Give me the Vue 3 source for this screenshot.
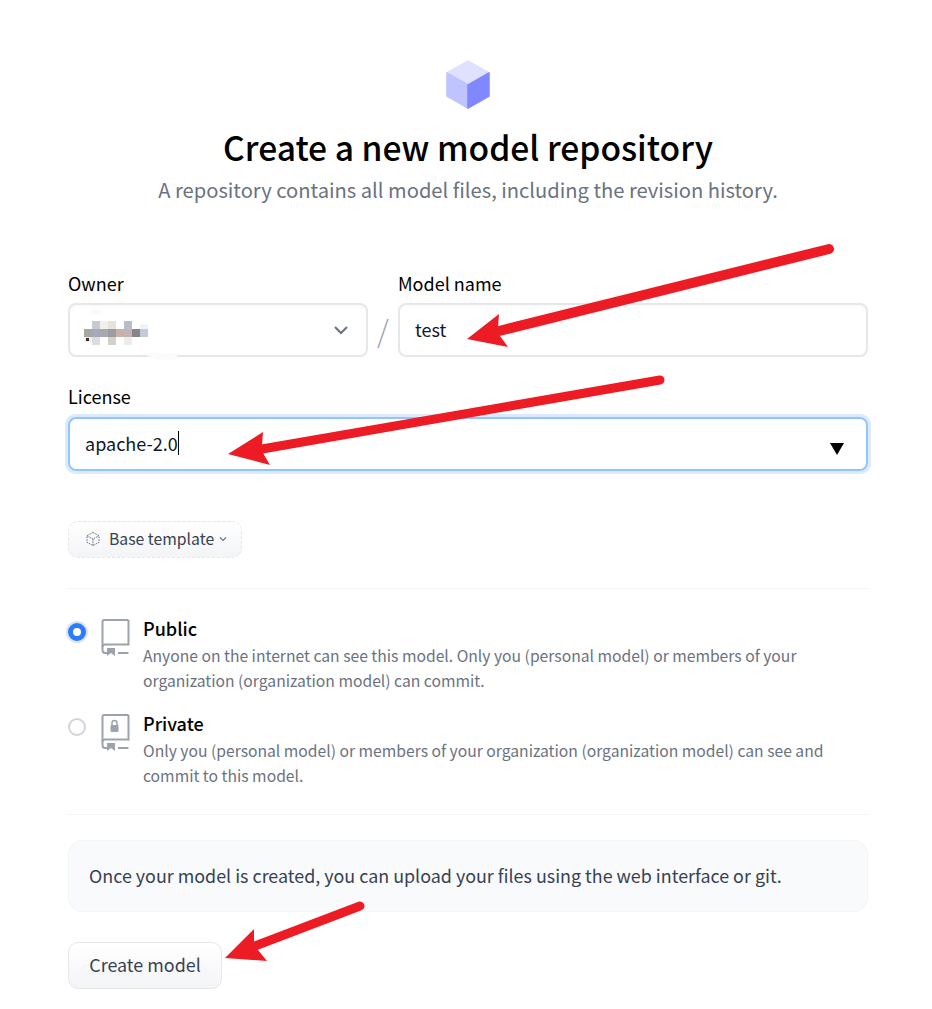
<template>
  <div class="page">
    <form class="form" @submit.prevent>
      <svg class="cube" viewBox="0 0 44 50" width="44" height="50">
        <path d="M22 1 L43 13 L22 25 L1 13 Z" fill="#dfe1ff" stroke="#dfe1ff" stroke-width="1.5" stroke-linejoin="round" />
        <path d="M1 13 L22 25 L22 48 L1 36 Z" fill="#bfc3ff" stroke="#bfc3ff" stroke-width="1.5" stroke-linejoin="round" />
        <path d="M43 13 L22 25 L22 48 L43 36 Z" fill="#8088ff" stroke="#8088ff" stroke-width="1.5" stroke-linejoin="round" />
      </svg>
      <h1>Create a new model repository</h1>
      <p class="subtitle">A repository contains all model files, including the revision history.</p>

      <div class="owner-row">
        <div class="field owner">
          <label>Owner</label>
          <div class="input select-box">
            <svg class="blurred" width="120" height="65" viewBox="0 0 120 65">
              <rect v-for="(b, i) in blurBlocks" :key="i" :x="b[0]" :y="b[1]" :width="b[2]" :height="b[3]" :fill="b[4]" />
              <path d="M70 53 L110 53 L104 60 L90 60 Z" fill="#fbfbfb" />
            </svg>
            <svg class="chevron" width="18" height="18" viewBox="0 0 18 18">
              <path d="M3 6 L9 12 L15 6" fill="none" stroke="#6b7280" stroke-width="2" />
            </svg>
          </div>
        </div>
        <span class="slash">/</span>
        <div class="field name">
          <label>Model name</label>
          <div class="input">test</div>
        </div>
      </div>

      <div class="field license">
        <label>License</label>
        <div class="input focused">
          <span>apache-2.0</span><i class="caret"></i>
          <svg class="triangle" width="14" height="12" viewBox="0 0 14 12">
            <path d="M0 0 H14 L7 12 Z" fill="#000" />
          </svg>
        </div>
      </div>

      <button type="button" class="template-btn">
        <svg width="16" height="16" viewBox="0 0 16 16" fill="none" stroke="#6b7280" stroke-width="1" stroke-dasharray="1.6 1">
          <path d="M8 1.5 L14 4.7 V11.3 L8 14.5 L2 11.3 V4.7 Z" />
          <path d="M2 4.7 L8 8 L14 4.7 M8 8 V14.5" />
        </svg>
        <span>Base template</span>
        <svg width="10" height="10" viewBox="0 0 10 10">
          <path d="M2 3.5 L5 6.5 L8 3.5" fill="none" stroke="#6b7280" stroke-width="1.2" />
        </svg>
      </button>

      <div class="visibility">
        <div v-for="opt in visibility" :key="opt.title" class="option">
          <span class="radio" :class="{ checked: opt.checked }"></span>
          <svg class="book" width="30" height="37" viewBox="0 0 30 37" fill="none" stroke="#9ca3af" stroke-width="2">
            <path d="M28.5 1 H4 Q2.5 1 2.5 3 V31 Q2.5 34 5 34 H7" />
            <path d="M2.5 28 Q2.5 25.5 5 25.5 H28.5 V1" />
            <path d="M18 34 H28.5" />
            <path d="M7 29 H15 V37 L11 34 L7 37 Z" fill="#9ca3af" stroke="none" />
            <template v-if="opt.lock">
              <rect x="10.5" y="11" width="8" height="7" rx="1" fill="#9ca3af" stroke="none" />
              <path d="M12 11 V9 a2.5 2.5 0 0 1 5 0 V11" stroke-width="1.5" />
            </template>
          </svg>
          <div class="option-text">
            <h2>{{ opt.title }}</h2>
            <p>{{ opt.line1 }}<br />{{ opt.line2 }}</p>
          </div>
        </div>
      </div>

      <div class="notice">Once your model is created, you can upload your files using the web interface or git.</div>

      <button type="submit" class="create-btn">Create model</button>
    </form>

    <!-- 截图上的红色标注箭头 -->
    <svg class="arrows" width="932" height="1009" viewBox="0 0 932 1009">
      <g v-for="(a, i) in arrows" :key="i">
        <line :x1="a.tail[0]" :y1="a.tail[1]" :x2="a.neck[0]" :y2="a.neck[1]" stroke="#ed1c24" :stroke-width="a.width" stroke-linecap="round" />
        <polygon :points="a.head" fill="#ed1c24" />
      </g>
    </svg>
  </div>
</template>

<script setup>
const visibility = [
  {
    title: 'Public',
    line1: 'Anyone on the internet can see this model. Only you (personal model) or members of your',
    line2: 'organization (organization model) can commit.',
    checked: true,
    lock: false,
  },
  {
    title: 'Private',
    line1: 'Only you (personal model) or members of your organization (organization model) can see and',
    line2: 'commit to this model.',
    checked: false,
    lock: true,
  },
]

// 打码区域的马赛克色块
const blurBlocks = [
  [22, 10, 8, 4, '#f8f8f8'],
  [22, 21, 8, 8, '#c8cacf'],
  [30, 21, 8, 8, '#f2f0ee'],
  [38, 21, 8, 8, '#e8e2dc'],
  [54, 21, 8, 8, '#b9bdc8'],
  [70, 24, 8, 5, '#eef4f8'],
  [14, 29, 8, 8, '#a8a6a3'],
  [22, 29, 8, 8, '#a4a9bb'],
  [30, 29, 8, 8, '#a9aaad'],
  [38, 29, 8, 8, '#9c9ca2'],
  [46, 29, 8, 8, '#c5b3a8'],
  [54, 29, 8, 8, '#c4b3b5'],
  [62, 29, 8, 8, '#87858c'],
  [70, 29, 8, 8, '#c3ccd6'],
  [14, 37, 8, 5, '#f0f0f0'],
  [16, 38, 3, 3, '#3a2a2a'],
  [22, 37, 8, 8, '#dcdcdc'],
  [38, 37, 8, 8, '#d2d1cb'],
  [54, 37, 8, 8, '#ececea'],
]

const arrows = [
  { tail: [829, 249], neck: [499, 331], width: 10, head: '467,339 499,314 498,327 500,336 508,347' },
  { tail: [660, 380], neck: [262, 449], width: 9, head: '228,454 263,432 262,445 263,453 270,465' },
  { tail: [360, 906], neck: [255, 946], width: 9, head: '225,958 254,929 254,942 258,950 267,961' },
]
</script>

<style scoped>
.page {
  position: relative;
  width: 932px;
  height: 1009px;
  overflow: hidden;
  background: #fff;
  font-family: 'Noto Sans CJK SC', 'Noto Sans', sans-serif;
  color: #111827;
}

.form {
  width: 800px;
  margin-left: 68px;
  padding-top: 60px;
  display: flex;
  flex-direction: column;
}

.cube {
  align-self: center;
  display: block;
}

h1 {
  margin: 12px 0 0;
  text-align: center;
  font-size: 33.6px;
  line-height: 50px;
  font-weight: 500;
  color: #000;
}

.subtitle {
  margin: 2px 0 0;
  text-align: center;
  font-size: 20.15px;
  line-height: 32px;
  color: #6b7280;
}

.owner-row {
  margin-top: 64px;
  display: flex;
  align-items: flex-end;
}

.field label {
  display: block;
  font-size: 18px;
  line-height: 26px;
  margin-bottom: 7px;
  color: #000;
}

.owner {
  width: 300px;
}

.name {
  flex: 1;
}

.slash {
  width: 30px;
  text-align: center;
  font-size: 30px;
  line-height: 54px;
  color: #9ca3af;
  font-weight: 300;
}

.input {
  position: relative;
  box-sizing: border-box;
  height: 54px;
  display: flex;
  align-items: center;
  padding: 0 15px 2px;
  border: 2px solid #e5e7eb;
  border-radius: 8px;
  font-size: 18px;
  color: #111827;
  box-shadow: inset 0 2px 3px rgba(0, 0, 0, 0.02);
}

.blurred {
  position: absolute;
  left: 0;
  top: -5px;
}

.chevron {
  position: absolute;
  right: 16px;
  top: 16px;
}

.license {
  margin-top: 26px;
}

.license label {
  margin-bottom: 8px;
}

.focused {
  border-color: #93c5fd;
  box-shadow: 0 0 0 3px #dbeafe;
}

.caret {
  width: 1px;
  height: 24px;
  background: #000;
}

.triangle {
  position: absolute;
  right: 22px;
  top: 24px;
}

.template-btn {
  align-self: flex-start;
  box-sizing: border-box;
  margin-top: 50px;
  width: 174px;
  height: 37px;
  padding: 0 0 2px 16px;
  display: flex;
  align-items: center;
  gap: 8px;
  border: 1px dashed #e5e7eb;
  border-radius: 10px;
  background: linear-gradient(#fff, #f3f4f6);
  font-family: inherit;
  font-size: 15.75px;
  color: #374151;
}

.template-btn span {
  margin-right: -4px;
}

.visibility {
  margin-top: 30px;
  padding: 24px 0 26px;
  border-top: 1px solid #f3f4f6;
  border-bottom: 1px solid #f3f4f6;
  display: flex;
  flex-direction: column;
  gap: 15px;
}

.option {
  display: flex;
  align-items: flex-start;
}

.radio {
  box-sizing: border-box;
  flex: none;
  width: 18px;
  height: 18px;
  margin-top: 10px;
  border-radius: 50%;
  border: 2px solid #d1d5db;
  background: #fff;
}

.radio.checked {
  border: 5px solid #2b7bff;
  box-shadow: 0 0 0 2px #dde3ee;
}

.book {
  flex: none;
  margin: 6px 13px 0 14px;
}

.option-text h2 {
  margin: 0;
  font-size: 18px;
  line-height: 30px;
  font-weight: 500;
  color: #000;
}

.option-text p {
  margin: 0;
  font-size: 15.68px;
  line-height: 25px;
  color: #6b7280;
}

.notice {
  box-sizing: border-box;
  margin-top: 25px;
  height: 72px;
  padding: 0 20px 2px;
  display: flex;
  align-items: center;
  border: 1px solid #f3f4f6;
  border-radius: 14px;
  background: #f9fafb;
  font-size: 17.9px;
  color: #374151;
}

.create-btn {
  align-self: flex-start;
  box-sizing: border-box;
  margin-top: 30px;
  width: 154px;
  height: 47px;
  padding-bottom: 5px;
  border: 1px solid #e5e7eb;
  border-radius: 10px;
  background: linear-gradient(#fff, #f3f4f6);
  font-family: inherit;
  font-size: 17.9px;
  color: #374151;
}

.arrows {
  position: absolute;
  left: 0;
  top: 0;
  pointer-events: none;
}
</style>
